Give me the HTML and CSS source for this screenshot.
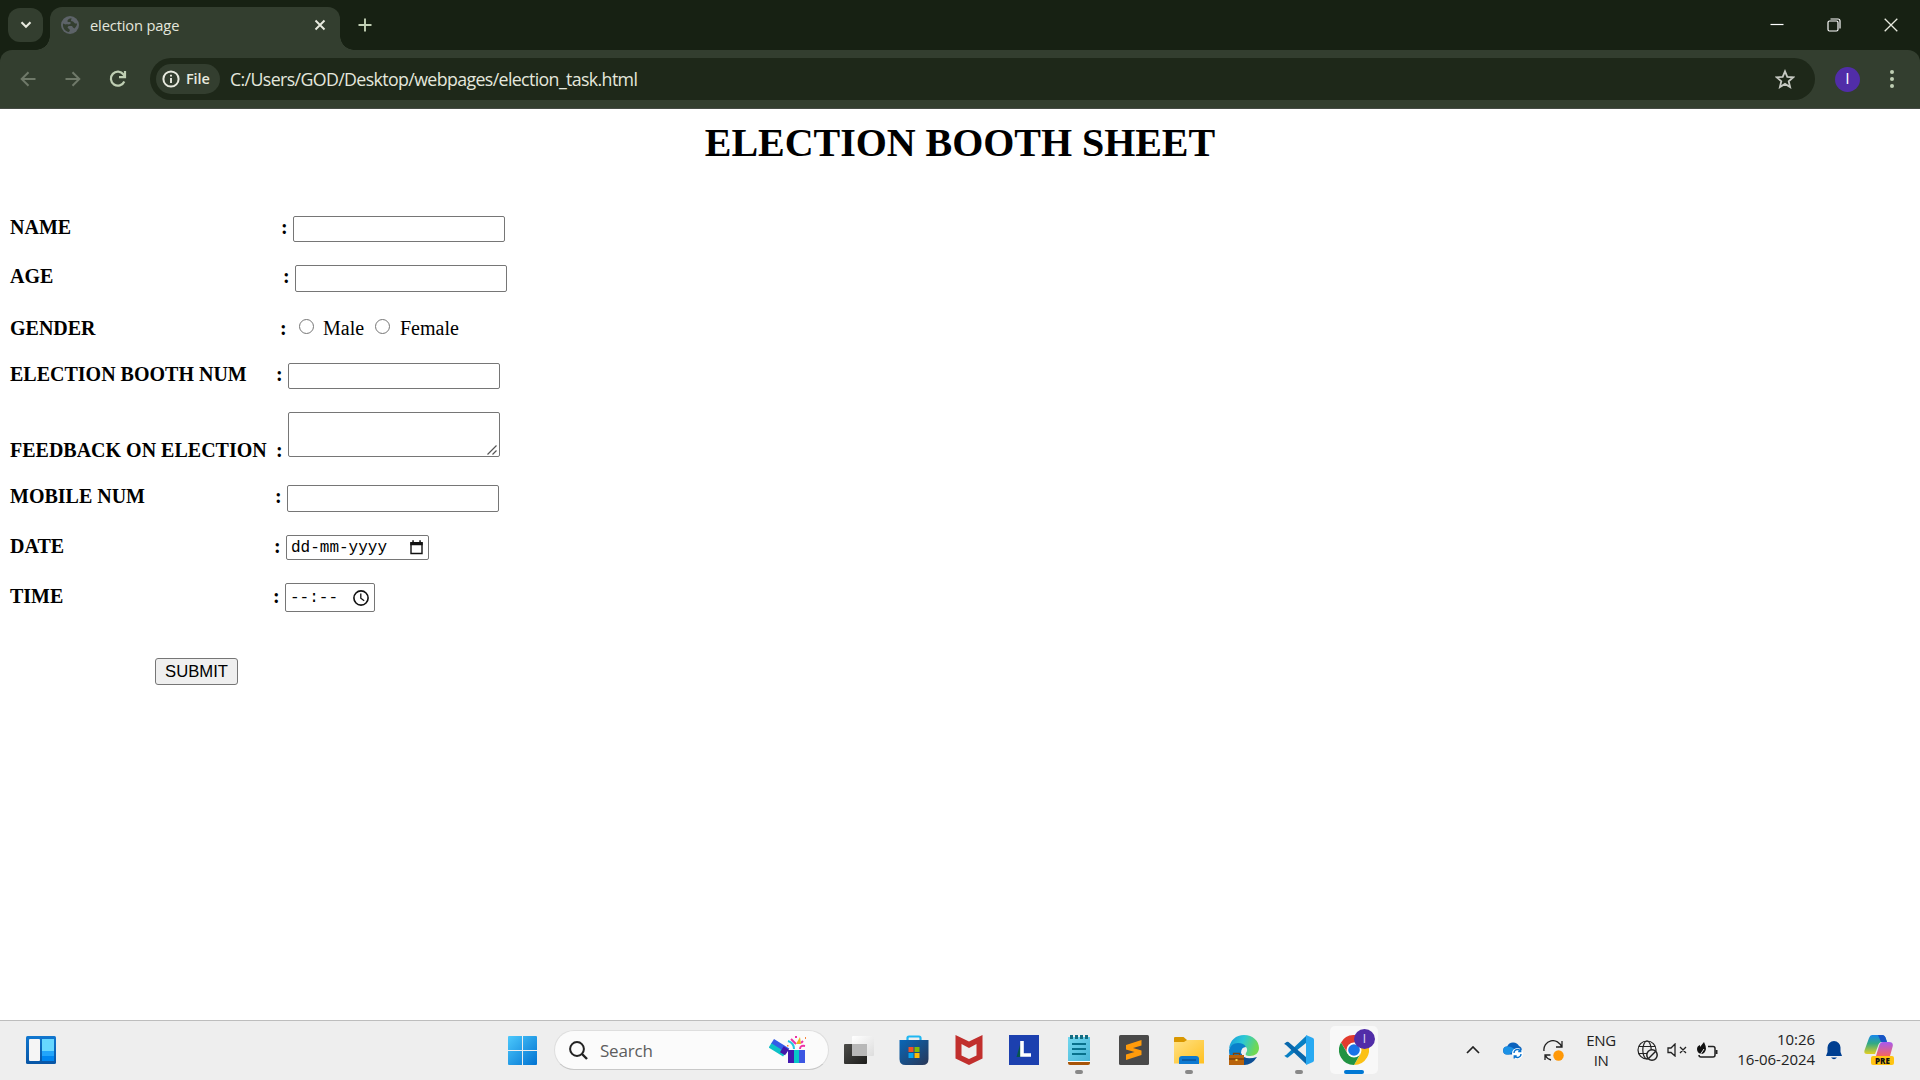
FILE: index.html
```html
<!DOCTYPE html>
<html lang="en">
<head>
<meta charset="utf-8">
<title>election page</title>
<link rel="stylesheet" href="styles.css">
</head>
<body>
<header class="tabstrip">
  <div class="tab-search"><svg width="12" height="8" viewBox="0 0 12 8"><path d="M1.5 1.2 6 5.7l4.500-4.500" fill="none" stroke="#e8eadf" stroke-width="2.100"/></svg></div>
  <div class="tab">
    <svg class="favicon" width="18" height="18" viewBox="0 0 18 18"><circle cx="9" cy="9" r="9" fill="#5d6368"/><path d="M10.500 2C7 3.200 6 4 6.800 6h2.700v2c-2 1-3.500 0-5 .5L2 7.500C1.500 12 4 15.500 8 16l1-2-2.500-2.500 1-1.500h3.500l1 1.500 1.500 1c2-2 2.500-3.500 2.500-5h-2L12 5.500 10 5z" fill="#333e2f"/></svg>
    <span class="tab-title">election page</span>
    <svg width="12" height="12" viewBox="0 0 12 12"><path d="m1.500 1.500 9 9m0-9-9 9" stroke="#e8eadf" stroke-width="1.900"/></svg>
  </div>
  <svg class="new-tab" width="14" height="14" viewBox="0 0 14 14"><path d="M7 .5v13M.5 7h13" stroke="#c2d0b5" stroke-width="1.900"/></svg>
  <div class="window-controls">
    <svg width="14" height="14" viewBox="0 0 14 14"><path d="M.5 6.500h13" stroke="#fff" stroke-width="1.200"/></svg>
    <svg width="14" height="14" viewBox="0 0 14 14" fill="none" stroke="#fff" stroke-width="1.200"><rect x="1" y="3" width="10" height="10" rx="1.500"/><path d="M3.500 1H11q2 0 2 2v7.500"/></svg>
    <svg width="14" height="14" viewBox="0 0 14 14"><path d="m.7.700 12.600 12.600m0-12.600L.7 13.300" stroke="#e8eadf" stroke-width="1.300"/></svg>
  </div>
</header>
<nav class="toolbar">
  <div class="nav-buttons">
    <svg width="16" height="16" viewBox="0 0 16 16" fill="none" stroke="#6f7969" stroke-width="2"><path d="M15.500 8H2m6.500-6.800L1.700 8l6.800 6.800"/></svg>
    <svg width="16" height="16" viewBox="0 0 16 16" fill="none" stroke="#6f7969" stroke-width="2"><path d="M.5 8H14M7.500 1.200 14.300 8l-6.800 6.800"/></svg>
    <svg width="18" height="18" viewBox="0 0 18 18" fill="none" stroke="#bfceb3" stroke-width="2.200"><path d="M15.300 11.500A7 7 0 1 1 14.500 4.500l1.500 2"/><path d="M16 1v6.200h-6"/></svg>
  </div>
  <div class="omnibox">
    <div class="chip"><svg width="18" height="18" viewBox="0 0 18 18"><circle cx="9" cy="9" r="7.600" fill="none" stroke="#e8eadf" stroke-width="2"/><path d="M9 8v5M9 4.700v1.900" stroke="#e8eadf" stroke-width="1.900"/></svg><span>File</span></div>
    <span class="url">C:/Users/GOD/Desktop/webpages/election_task.html</span>
    <svg width="20" height="20" viewBox="0 0 20 20"><path d="m10 2.300 2.300 5.500 5.900.5-4.500 3.900 1.400 5.800-5.100-3.100L4.900 18l1.400-5.800-4.500-3.900 5.900-.5z" fill="none" stroke="#c6c9c2" stroke-width="1.800"/></svg>
  </div>
  <div class="avatar">I</div>
  <svg width="4" height="18" viewBox="0 0 4 18" fill="#bfceb3"><circle cx="2" cy="2" r="2"/><circle cx="2" cy="9" r="2"/><circle cx="2" cy="16" r="2"/></svg>
</nav>

<main class="page">
  <h1>ELECTION BOOTH SHEET</h1>
  <form class="booth-form">
    <div class="row name"><b class="label">NAME</b><b class="colon">:</b><input class="field" type="text"></div>
    <div class="row age"><b class="label">AGE</b><b class="colon">:</b><input class="field tall" type="text"></div>
    <div class="row gender"><b class="label">GENDER</b><b class="colon">:</b><i class="radio"></i><span class="male">Male</span><i class="radio"></i><span class="female">Female</span></div>
    <div class="row booth"><b class="label">ELECTION BOOTH NUM</b><b class="colon">:</b><input class="field" type="text"></div>
    <div class="row feedback"><b class="label">FEEDBACK ON ELECTION</b><b class="colon">:</b><div class="field area"><svg width="10" height="10" viewBox="0 0 10 10"><path d="M.5 9.500l9-9M5.500 9.500l4-4" stroke="#555" stroke-width="1.200"/></svg></div></div>
    <div class="row mobile"><b class="label">MOBILE NUM</b><b class="colon">:</b><input class="field tall" type="text"></div>
    <div class="row date"><b class="label">DATE</b><b class="colon">:</b><div class="field picker"><span>dd-mm-yyyy</span><svg width="13" height="15" viewBox="0 0 13 15"><path d="M1 3h11v10.500H1z" fill="none" stroke="#111" stroke-width="1.400"/><path d="M.3 2h12.400v3.300H.3zM2.300.3h1.500v2H2.300zm7 0h1.500v2H9.300z" fill="#111"/></svg></div></div>
    <div class="row time"><b class="label">TIME</b><b class="colon">:</b><div class="field picker"><span>--:--</span><svg width="16" height="16" viewBox="0 0 16 16" fill="none" stroke="#111"><circle cx="8" cy="8" r="7.100" stroke-width="1.600"/><path d="M7.800 3.500v4.700l3.400 2.500" stroke-width="1.300"/></svg></div></div>
    <button class="submit" type="button">SUBMIT</button>
  </form>
</main>

<footer class="taskbar">
  <svg class="widgets" width="30" height="28" viewBox="0 0 30 28"><defs><linearGradient id="wg" x2="0" y2="1"><stop stop-color="#1177cf"/><stop offset="1" stop-color="#0755a5"/></linearGradient></defs><rect width="30" height="28" rx="1.500" fill="url(#wg)"/><rect x="3" y="3" width="11" height="22" rx="1" fill="#f5f5f5"/><path d="M16 3h12v12H16z" fill="#67d7ff"/><path d="M16 15h12v5H16z" fill="#22a5fb"/><path d="M16 20h12v5H16z" fill="#0086f0"/></svg>
  <svg class="start" width="29" height="29" viewBox="0 0 29 29"><defs><linearGradient id="st" gradientUnits="userSpaceOnUse" x1="0" y1="0" x2="29" y2="29"><stop stop-color="#4cc9fc"/><stop offset="1" stop-color="#0072d1"/></linearGradient></defs><path d="M1 0h13v14H0V1q0-1 1-1zM15 0h13q1 0 1 1v13H15zM0 15h14v14H1q-1 0-1-1zM15 15h14v13q0 1-1 1H15z" fill="url(#st)"/></svg>
  <div class="search">
    <svg width="19" height="19" viewBox="0 0 19 19" fill="none" stroke="#222" stroke-width="2"><circle cx="8" cy="8" r="6.900"/><path d="m13 13 5 5" stroke-width="2.400"/></svg>
    <span>Search</span>
    <svg width="38" height="28" viewBox="0 0 38 28"><g transform="rotate(32 10 12)"><path d="M1 7h18v6H1z" fill="#335be8"/><path d="M1 12h17v5H1z" fill="#0dc0c7"/><path d="M13 8h6v7h-6z" fill="#4317a8"/></g><path d="M19 14h17v13H19z" fill="#4318af"/><path d="M25 14h5v13h-5z" fill="#08c6c8"/><path d="M30 14h6v13h-6z" fill="#3c57e3"/><path d="M19 5q6 2 6 8" stroke="#24c7e2" stroke-width="2" fill="none"/><path d="m22 3 5 5M36 10q-5-1-5 3M34 5l-2 2" stroke="#ed32a5" stroke-width="2" fill="none"/><path d="m31 1-4 7h5z" fill="#efb321"/><path d="M18 9h1.500v1.500H18zM36 1h1v2h-1z" fill="#f8873a"/><path d="M26 0h2v2h-2z" fill="#ed32a5"/></svg>
  </div>
  <div class="apps">
    <div class="app"><svg width="30" height="30" viewBox="0 0 30 30"><defs><linearGradient id="tv" x2="1" y2="1"><stop stop-color="#4d4d4a"/><stop offset="1" stop-color="#1d1d1b"/></linearGradient><linearGradient id="tw" x2="1" y2="1"><stop stop-color="#fff"/><stop offset="1" stop-color="#ddd"/></linearGradient></defs><rect y="9" width="23" height="20" rx="1" fill="url(#tv)"/><rect x="8" y="1" width="22" height="20" rx="1" fill="url(#tw)"/><path d="M8 9h15v12H8z" fill="#b8b8b8"/></svg></div>
    <div class="app"><svg width="30" height="30" viewBox="0 0 30 30"><defs><linearGradient id="ms" x2="1" y2="1"><stop stop-color="#0867b8"/><stop offset="1" stop-color="#293757"/></linearGradient></defs><path d="M8.500 6V3q0-1.500 1.500-1.500h10q1.500 0 1.500 1.500v3" fill="none" stroke="#20b7f2" stroke-width="2.200"/><path d="M.5 5h29v19q0 6-6 6h-17q-6 0-6-6z" fill="url(#ms)"/><path d="M9.500 12h5v5h-5z" fill="#f35325"/><path d="M15.500 12h5v5h-5z" fill="#81bc06"/><path d="M9.500 18h5v5h-5z" fill="#05a6f0"/><path d="M15.500 18h5v5h-5z" fill="#ffba08"/></svg></div>
    <div class="app"><svg width="28" height="30" viewBox="0 0 28 30"><path d="m.5 0 13.500 6.500L27.500 0v23.500L14 30 .5 23.500zM6.500 9v11.500L14 24l7.500-3.500V9L14 13z" fill="#c12f2d" fill-rule="evenodd"/></svg></div>
    <div class="app"><svg width="30" height="30" viewBox="0 0 30 30"><path d="M0 0h30v30H0z" fill="#1c40af"/><path d="m11.500 8-4 14h5z" fill="#07554f"/><path d="M13 6v14h9" fill="none" stroke="#fff" stroke-width="3.600"/></svg></div>
    <div class="app running"><svg width="24" height="30" viewBox="0 0 24 30"><defs><linearGradient id="np" x2="1" y2="1"><stop stop-color="#72d8ef"/><stop offset="1" stop-color="#47b4d6"/></linearGradient></defs><path d="M1 26h22v2q0 2-2 2H3q-2 0-2-2z" fill="#a75408"/><path d="M1 2h22v24H1z" fill="url(#np)"/><path d="M1 26h22v1H1z" fill="#fff"/><path d="M5 9h14M5 14h14M5 19h14" stroke="#08718c" stroke-width="1.800"/><path d="M4.500 0v4M9.500 0v4M14.500 0v4M19.500 0v4" stroke="#126c82" stroke-width="3"/></svg></div>
    <div class="app"><svg width="30" height="30" viewBox="0 0 30 30"><rect width="30" height="30" rx="1.500" fill="#494949"/><path d="M22.500 5v5.500L14 13l8.500 2.500V20L7 25v-5.500l8.500-2.500L7 14.500V10z" fill="#ff9b0b"/></svg></div>
    <div class="app running"><svg width="30" height="28" viewBox="0 0 30 28"><defs><linearGradient id="fx" x2="1" y2="1"><stop stop-color="#ffe184"/><stop offset="1" stop-color="#ffc020"/></linearGradient></defs><path d="M0 8V2q0-1 1-1h8.500L13 4v4z" fill="#d99700"/><path d="M0 6h10l3-2h17v23.500H0z" fill="url(#fx)"/><path d="M5 28v-5q0-3 3-3h14q3 0 3 3v5z" fill="#0c79d1"/><path d="M8 24h14" stroke="#06417e"/></svg></div>
    <div class="app"><svg width="30" height="30" viewBox="0 0 30 30"><defs><linearGradient id="ed" x2="1" y2=".3"><stop stop-color="#1798dd"/><stop offset=".5" stop-color="#2bc8d5"/><stop offset="1" stop-color="#70d853"/></linearGradient></defs><path d="M0 14C1 5 7 0 15 0c9 0 15 6 15 13 0 5-4 8-9 8-4 0-5-1-4-3 3-4 0-8-6-8Q3 9 0 14z" fill="url(#ed)"/><path d="M0 15Q2 8 9 8q6 0 8 4-5 0-5 6 0 6 6 11-18 4-18-14z" fill="#0a80cb"/><path d="M12 18q3 8 16 4-5 8-13 8-5-4-3-12z" fill="#0c4f94"/><path d="M0 20h15v10H0z" fill="#b8630c"/><path d="M4.500 20v-1.500h6V20M0 24h15" fill="none" stroke="#7b420a" stroke-width="1.300"/><path d="M6.500 24h2v2h-2z" fill="#ffd34c"/></svg></div>
    <div class="app running"><svg width="30" height="30" viewBox="0 0 30 30"><path d="m2 20 20-19v7L4 22.500q-1 .5-2-.5l-1.500-1q-.5-.500 1.500-1z" fill="#087fc3"/><path d="M2 10Q-.5 9 .5 8.500L2.500 7q1-.5 2 0L22 22v7z" fill="#0868ad"/><path d="m22 0 7 3q1 .5 1 2v20q0 1.500-1 2l-7 3z" fill="#28a9f2"/></svg></div>
    <div class="app active"><svg width="30" height="30" viewBox="0 0 30 30"><path d="M2 7.500A15 15 0 0 1 28 7.500H15L8.500 18z" fill="#e33b2e"/><path d="M28 7.500A15 15 0 0 1 15 30l6.500-11L15 7.500z" fill="#fbc116"/><path d="M15 30A15 15 0 0 1 2 7.500l6.500 11h13z" fill="#229342"/><circle cx="15" cy="15" r="7.500" fill="#fff"/><circle cx="15" cy="15" r="5.800" fill="#1a73e8"/></svg><span class="badge">I</span></div>
  </div>
  <div class="tray">
    <svg class="chevron" width="14" height="8" viewBox="0 0 14 8"><path d="m1 7 6-6 6 6" fill="none" stroke="#222" stroke-width="1.700"/></svg>
    <svg class="cloud" width="20" height="18" viewBox="0 0 20 18"><path d="M4 13.500a4 4 0 0 1 .2-8A6.500 6.500 0 0 1 16 5q3 1 3 5l-4 3.500z" fill="#0b62bd"/><path d="M4.500 5.500Q9 5 12 9l-6 4.500H4a4 4 0 0 1 .5-8z" fill="#1b91e5"/><circle cx="14.500" cy="12.500" r="5.500" fill="#fff"/><path d="M11 12a3.600 3.600 0 0 1 6.500-2M18 13a3.600 3.600 0 0 1-6.500 2m6.200-7v2.500h-2.500m-4 7v-2.500h2.500" fill="none" stroke="#0872ce" stroke-width="1.300"/></svg>
    <svg class="sync" width="21" height="21" viewBox="0 0 21 21"><path d="M1 11A9 9 0 0 1 18.500 7M19 1v6h-6M2 20v-5h5.500M2 15q2 4 6 5" fill="none" stroke="#222" stroke-width="1.300"/><circle cx="15.500" cy="15.500" r="5.200" fill="#ff9807"/></svg>
    <div class="lang"><span>ENG</span><span>IN</span></div>
    <svg class="globe" width="21" height="21" viewBox="0 0 21 21" fill="none" stroke="#222" stroke-width="1.200"><circle cx="10" cy="10" r="9"/><ellipse cx="10" cy="10" rx="4.200" ry="9"/><path d="M2 6.500h16M1.500 13.500H10"/><circle cx="15" cy="15" r="5.200" fill="#eee" stroke-width="1.500"/><path d="m11.500 18.500 7-7" stroke-width="1.500"/></svg>
    <svg class="speaker" width="20" height="14" viewBox="0 0 20 14" fill="none" stroke="#222" stroke-width="1.300"><path d="M1 5h3l4-4v12L4 9.500H1zM13 4l6 6m0-6-6 6"/></svg>
    <svg class="battery" width="21" height="17" viewBox="0 0 21 17"><path d="M11 4.500h5q2 0 2 2V13q0 2-2 2H4q-2 0-2-2" fill="none" stroke="#222" stroke-width="1.500"/><path d="M18.500 8h2v4h-2z" fill="#222"/><path d="M7 0q2 4 2 7-1 5-5 5Q0 11 0 7q0-3 3-4v2z" fill="#111"/><path d="m3 13 4-6" stroke="#eee"/></svg>
    <div class="clock"><span>10:26</span><span>16-06-2024</span></div>
    <svg class="bell" width="16" height="19" viewBox="0 0 16 19"><path d="M1.500 6.500a6.500 6.500 0 0 1 13 0V11l1.500 4H0l1.500-4z" fill="#003f91"/><path d="M5 16.500h6Q8 20 5 16.500z" fill="#003f91"/></svg>
    <div class="copilot"><svg width="29" height="23" viewBox="0 0 29 23"><defs><linearGradient id="ca" x2="0" y2="1"><stop stop-color="#1687ed"/><stop offset=".45" stop-color="#33aa83"/><stop offset="1" stop-color="#e4cf22"/></linearGradient><linearGradient id="cb" x2="0" y2="1"><stop stop-color="#a75af0"/><stop offset="1" stop-color="#f5655f"/></linearGradient></defs><path d="M8 0h10q3 0 4 4l1 3h-5q-3 0-4 4l-3 8H3q-4 0-2-5L5 3q1-3 3-3z" fill="url(#ca)"/><path d="M14 0h4q3 0 4 4l1 3h-6z" fill="#1854c5"/><path d="M19 7h6q5 0 3.500 5L26 21H12l3-10q1-4 4-4z" fill="url(#cb)"/></svg><span class="pre">PRE</span></div>
  </div>
</footer>
</body>
</html>
```
FILE: styles.css
```css
* { box-sizing: border-box; }
body { margin: 0; width: 1920px; height: 1080px; overflow: hidden; display: flex; flex-direction: column; background: #fff; font-family: "Open Sans", sans-serif; }
svg { display: block; flex: none; }

/* Browser frame */
.tabstrip { height: 50px; flex: none; display: flex; align-items: flex-start; background: #172113; padding-left: 8px; }
.tab-search { width: 35px; height: 34px; margin-top: 8px; border-radius: 12px; background: #333e2f; display: flex; align-items: center; justify-content: center; }
.tab { position: relative; width: 290px; height: 43px; margin: 7px 0 0 7px; padding: 0 14px 7px 11px; border-radius: 12px 12px 0 0; background: #333e2f; display: flex; align-items: center; }
.tab::before, .tab::after { content: ""; position: absolute; bottom: 0; width: 14px; height: 14px; }
.tab::before { left: -14px; background: radial-gradient(circle at 0 0, transparent 13.5px, #333e2f 14px); }
.tab::after { right: -14px; background: radial-gradient(circle at 100% 0, transparent 13.5px, #333e2f 14px); }
.tab-title { flex: 1; margin-left: 11px; color: #e3e6dc; font-size: 14.7px; letter-spacing: -.15px; }
.new-tab { margin: 18px 0 0 18px; }
.window-controls { margin: 18px 22px 0 auto; display: flex; gap: 43px; }
.toolbar { position: relative; height: 59px; flex: none; display: flex; align-items: center; background: #333e2f; border-bottom: 1px solid #454a44; border-radius: 12px 12px 0 0; padding: 0 26px 0 20px; }
.toolbar::before { content: ""; position: absolute; inset: 0 0 auto 0; height: 12px; z-index: -1; background: #172113; }
.nav-buttons { display: flex; align-items: center; gap: 28.500px; width: 130px; }
.omnibox { width: 1665px; height: 42px; border-radius: 21px; background: #1e2819; display: flex; align-items: center; padding: 0 20px 0 6px; }
.chip { width: 64px; height: 30px; border-radius: 15px; background: #333e2f; display: flex; align-items: center; gap: 6px; padding: 0 0 1px 6px; color: #e8eadf; font-size: 14.5px; font-weight: 600; letter-spacing: -.1px; }
.url { flex: 1; margin-left: 10px; color: #e4e7dd; font-size: 17.8px; letter-spacing: -.63px; }
.avatar { width: 25px; height: 25px; margin: 0 30px 0 20px; border-radius: 50%; background: #512da8; color: #fff; font: 14px/25px Roboto, sans-serif; text-align: center; }

/* Election form */
.page { height: 911px; flex: none; font: 20px/22px "Liberation Serif", serif; color: #000; }
h1 { margin: 0; padding-top: 11px; font-size: 40px; line-height: 45px; letter-spacing: -.05px; text-align: center; }
.booth-form { padding: 51px 0 0 10px; }
.row { display: flex; align-items: flex-start; }
.colon { width: 12px; }
.field { width: 212px; height: 26px; margin: 0; padding: 0 4px; border: 1px solid #767676; border-radius: 2px; background: #fff; }
.field.tall { height: 27px; }
.name { height: 49px; }
.name .label { width: 271px; }
.age { height: 52px; }
.age .label { width: 273px; }
.gender { height: 46px; }
.gender .label { width: 270px; }
.radio { width: 15px; height: 15px; margin-top: 2px; border: 1px solid #767676; border-radius: 50%; }
.gender .colon { width: 19px; }
.male { width: 52px; margin-left: 9px; }
.female { margin-left: 10px; }
.booth { height: 49px; }
.booth .label, .feedback .label { width: 266px; }
.feedback { height: 73px; }
.feedback .label, .feedback .colon { margin-top: 27px; }
.area { height: 45px; padding: 0 2px 1px 0; display: flex; align-items: flex-end; justify-content: flex-end; }
.mobile { height: 50px; }
.mobile .label { width: 265px; }
.date { height: 48px; }
.date .label { width: 264px; }
.picker { display: flex; align-items: center; justify-content: space-between; font: 16px "Liberation Mono", monospace; }
.picker span { padding-top: 1px; }
.date .picker { width: 143px; height: 25px; padding-right: 5px; }
.time { height: 75px; }
.time .label { width: 263px; }
.time .label, .time .colon { margin-top: 2px; }
.time .picker { width: 90px; height: 29px; padding-right: 5px; }
.submit { display: block; width: 83px; height: 27px; margin-left: 145px; padding: 0; border: 1px solid #767676; border-radius: 3px; background: #efefef; color: #000; font: 16.67px "Liberation Sans", sans-serif; }

/* Desktop taskbar */
.taskbar { height: 60px; flex: none; display: flex; align-items: center; background: #eee; border-top: 1px solid #bdbdbd; padding-bottom: 1px; color: #222; font-size: 15px; }
.widgets { margin-left: 26px; }
.start { margin-left: 452px; }
.search { width: 275px; height: 40px; margin-left: 17px; border: 1px solid #dedede; border-bottom-color: #c8c8c8; border-radius: 20px; background: #fbfbfb; display: flex; align-items: center; padding: 0 21px 0 14px; }
.search span { flex: 1; margin-left: 12px; font-size: 17px; color: #5d5d5d; letter-spacing: -.2px; }
.apps { display: flex; margin-left: 2px; }
.app { position: relative; width: 55px; height: 48px; display: flex; align-items: center; justify-content: center; }
.running::after, .active::after { content: ""; position: absolute; bottom: 0; width: 8px; height: 4px; border-radius: 2px; background: #888; }
.active { width: 48px; margin-left: 4px; background: #f8f8f8; border-radius: 5px; }
.active::after { width: 20px; background: #0078d4; }
.badge { position: absolute; left: 24px; top: 3px; width: 21px; height: 20px; border-radius: 50%; background: #512da8; color: #d8cff0; font: 12px/20px Roboto, sans-serif; text-align: center; }
.tray { flex: 1; display: flex; align-items: center; margin-left: 88px; }
.cloud { margin-left: 23px; }
.sync { margin-left: 20px; }
.lang { width: 42px; margin-left: 16px; padding-bottom: 1px; display: flex; flex-direction: column; text-align: center; line-height: 20px; letter-spacing: -.4px; }
.globe { margin-left: 15px; }
.speaker { margin-left: 9px; }
.battery { margin-left: 10px; }
.clock { width: 90px; margin-left: 7px; padding-bottom: 3px; display: flex; flex-direction: column; align-items: flex-end; line-height: 20px; letter-spacing: -.05px; white-space: nowrap; }
.bell { margin-left: 11px; }
.copilot { position: relative; width: 30px; height: 30px; margin-left: 22px; }
.pre { position: absolute; left: 7px; bottom: 0; width: 23px; height: 9px; border-radius: 2px; background: #ffc412; color: #111; font: 800 8px/9px "Open Sans", sans-serif; text-align: center; }
```
